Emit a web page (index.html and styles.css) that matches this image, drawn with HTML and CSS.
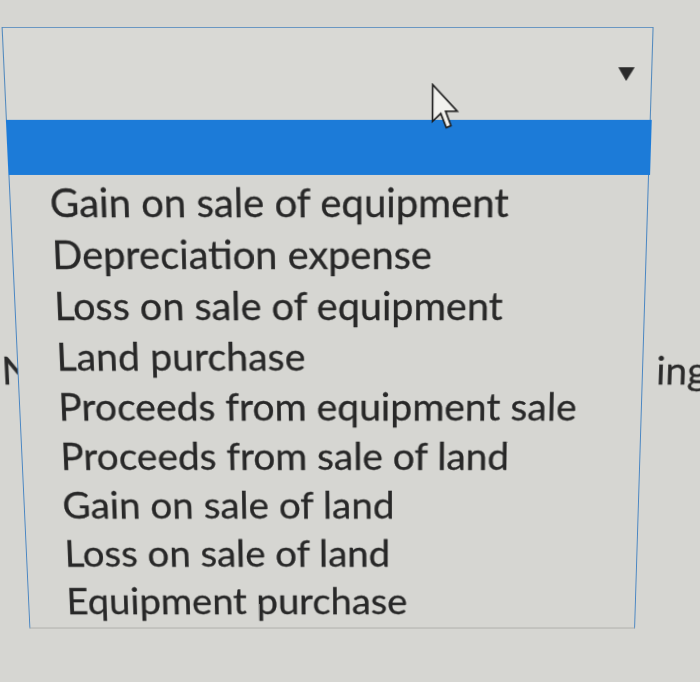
FILE: index.html
```html
<!DOCTYPE html>
<html lang="en">

<head>
    <meta charset="UTF-8">
    <meta name="viewport" content="width=device-width, initial-scale=1.0">
    <title>Cash Flow Item</title>
    <link rel="stylesheet" href="styles.css">
</head>

<body>
    <div class="screen">
        <div class="picker">
            <div class="select">
                <span class="arrow"></span>
            </div>

            <!-- table row underneath the open list -->
            <div class="row-behind">
                <span class="left-label">N</span>
                <span class="right-label"><span class="hidden-t">t</span>ing</span>
            </div>

            <ul class="options">
                <li class="selected"></li>
                <li>Gain on sale of equipment</li>
                <li>Depreciation expense</li>
                <li>Loss on sale of equipment</li>
                <li>Land purchase</li>
                <li>Proceeds from equipment sale</li>
                <li>Proceeds from sale of land</li>
                <li>Gain on sale of land</li>
                <li>Loss on sale of land</li>
                <li>Equipment purchase</li>
            </ul>

            <svg class="cursor" width="28" height="45" viewBox="0 0 28 45">
                <path d="M1.5 1.5 L1.5 36.5 L9.5 29 L15 42.5 L19.5 40.5 L14.2 26.8 L25.5 26.8 Z" fill="#f2f2ee" stroke="#1c1c1c" stroke-width="1.6" stroke-linejoin="miter" />
            </svg>
        </div>
    </div>
</body>

</html>
```

FILE: styles.css
```css
body {
    margin: 0;
    background-color: #d6d6d2;
    font-family: Lato, "Open Sans", sans-serif;
    color: #282828;
    overflow: hidden;
}

.screen {
    width: 700px;
    height: 682px;
    padding-top: 36px;
    box-sizing: border-box;
}

/* the monitor is shot at a slight angle, so the whole control leans back */
.picker {
    position: relative;
    margin-left: 16px;
    width: 628px;
    height: 605px;
    transform-origin: 50% 50%;
    transform: perspective(1000px) rotateX(-7deg) skewX(0.44deg);
}

.select {
    height: 88px;
    box-sizing: border-box;
    border: 1.5px solid #5088bd;
    border-bottom: none;
    background-color: #d9d9d5;
    position: relative;
}

.arrow {
    position: absolute;
    left: 594px;
    top: 37px;
    width: 0;
    height: 0;
    border-left: 8px solid transparent;
    border-right: 8px solid transparent;
    border-top: 13px solid #2b2b2b;
}

.row-behind {
    display: grid;
    grid-template-columns: 629px auto;
    margin-left: -16px;
    margin-top: 226px;
    font-size: 39.4px;
    line-height: 40px;
    color: #2a2a2a;
    -webkit-text-stroke: 0.3px #2a2a2a;
}

.hidden-t {
    margin-right: 14px;
}

.options {
    position: absolute;
    top: 88px;
    left: 0;
    right: 0;
    margin: 0;
    padding: 0 0 4px 0;
    list-style: none;
    background-color: #d6d6d2;
    border-left: 1.5px solid #4a86c2;
    border-right: 1.5px solid #4a86c2;
    border-bottom: 2px solid #c2c2be;
}

.options li {
    height: 51px;
    line-height: 51px;
    padding-left: 38.5px;
    font-size: 39.4px;
    white-space: nowrap;
    -webkit-text-stroke: 0.3px #282828;
}

.options li.selected {
    height: 53px;
    margin-left: -1.5px;
    margin-right: -1.5px;
    background-color: #1c7bd8;
}

.cursor {
    position: absolute;
    left: 414px;
    top: 53px;
}
```
